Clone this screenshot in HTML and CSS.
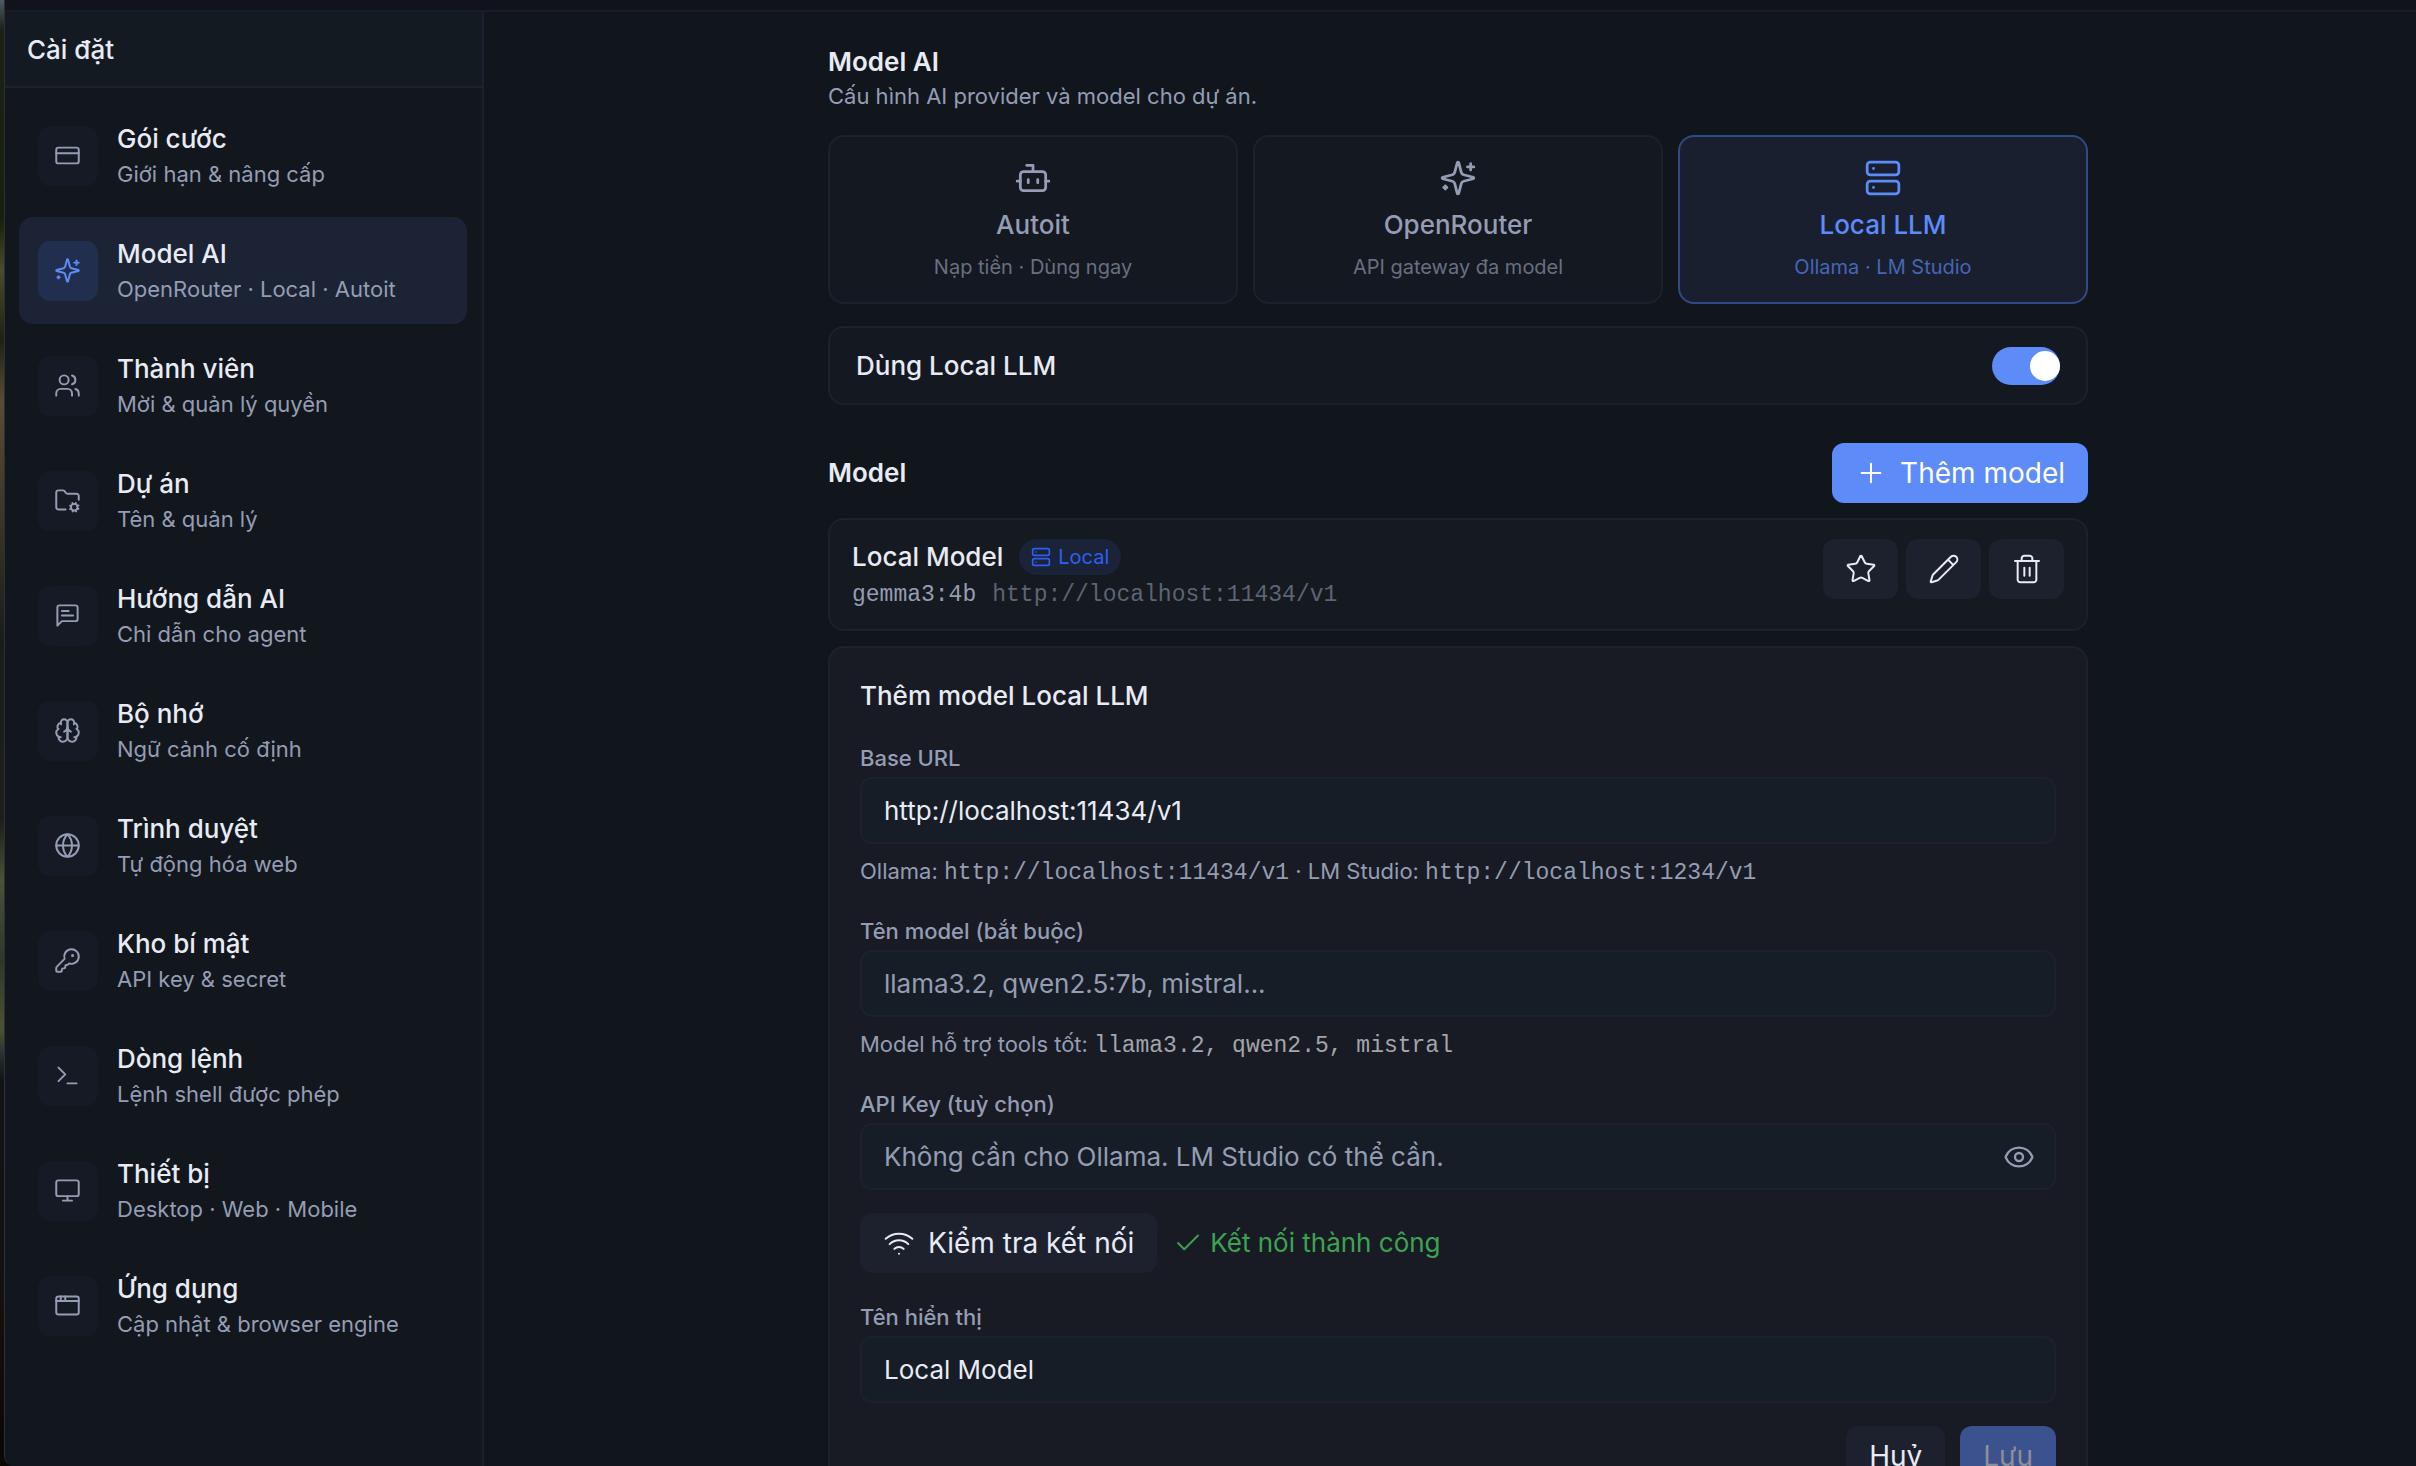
FILE: index.html
```html
<!DOCTYPE html>
<html lang="vi">
<head>
<meta charset="utf-8">
<meta name="viewport" content="width=device-width, initial-scale=1">
<title>Cài đặt</title>
<link rel="stylesheet" href="styles.css">
</head>
<body>
<svg class="sprite" aria-hidden="true">
  <symbol id="i-card" viewBox="0 0 24 24"><rect width="20" height="14" x="2" y="5" rx="2"/><path d="M2 10h20"/></symbol>
  <symbol id="i-sparkles" viewBox="0 0 24 24"><path d="M9.937 15.5A2 2 0 0 0 8.5 14.063l-6.135-1.582a.5.5 0 0 1 0-.962L8.5 9.936A2 2 0 0 0 9.937 8.5l1.582-6.135a.5.5 0 0 1 .963 0L14.063 8.5A2 2 0 0 0 15.5 9.937l6.135 1.581a.5.5 0 0 1 0 .964L15.5 14.063a2 2 0 0 0-1.437 1.437l-1.582 6.135a.5.5 0 0 1-.963 0z"/><path d="M20 3v4M22 5h-4M4 17v2M5 18H3"/></symbol>
  <symbol id="i-users" viewBox="0 0 24 24"><path d="M16 21v-2a4 4 0 0 0-4-4H6a4 4 0 0 0-4 4v2"/><circle cx="9" cy="7" r="4"/><path d="M22 21v-2a4 4 0 0 0-3-3.87M16 3.13a4 4 0 0 1 0 7.75"/></symbol>
  <symbol id="i-folder" viewBox="0 0 24 24"><circle cx="18" cy="18" r="3"/><path d="M10.3 20H4a2 2 0 0 1-2-2V5a2 2 0 0 1 2-2h3.900a2 2 0 0 1 1.690.9l.810 1.200a2 2 0 0 0 1.670.9H20a2 2 0 0 1 2 2v3.300"/><path d="m21.700 19.400-.9-.3M15.200 16.900l-.9-.3M16.600 21.700l.3-.9M19.100 15.200l.3-.9M19.600 21.700l-.4-1M16.800 15.300l-.4-1M14.300 19.600l1-.4M20.700 16.800l1-.4"/></symbol>
  <symbol id="i-message" viewBox="0 0 24 24"><path d="M21 15a2 2 0 0 1-2 2H7l-4 4V5a2 2 0 0 1 2-2h14a2 2 0 0 1 2 2zM13 8H7M17 12H7"/></symbol>
  <symbol id="i-brain" viewBox="0 0 24 24"><path d="M12 5a3 3 0 1 0-5.997.125 4 4 0 0 0-2.526 5.770 4 4 0 0 0 .556 6.588A4 4 0 1 0 12 18Z"/><path d="M12 5a3 3 0 1 1 5.997.125 4 4 0 0 1 2.526 5.770 4 4 0 0 1-.556 6.588A4 4 0 1 1 12 18Z"/><path d="M15 13a4.500 4.500 0 0 1-3-4 4.500 4.500 0 0 1-3 4M17.599 6.500a3 3 0 0 0 .399-1.375M6.003 5.125A3 3 0 0 0 6.401 6.500M3.477 10.896a4 4 0 0 1 .585-.396M19.938 10.500a4 4 0 0 1 .585.396M6 18a4 4 0 0 1-1.967-.516M19.967 17.484A4 4 0 0 1 18 18"/></symbol>
  <symbol id="i-globe" viewBox="0 0 24 24"><circle cx="12" cy="12" r="10"/><path d="M12 2a14.500 14.500 0 0 0 0 20 14.500 14.500 0 0 0 0-20M2 12h20"/></symbol>
  <symbol id="i-key" viewBox="0 0 24 24"><path d="M2.586 17.414A2 2 0 0 0 2 18.828V21a1 1 0 0 0 1 1h3a1 1 0 0 0 1-1v-1a1 1 0 0 1 1-1h1a1 1 0 0 0 1-1v-1a1 1 0 0 1 1-1h.172a2 2 0 0 0 1.414-.586l.814-.814a6.500 6.500 0 1 0-4-4z"/><circle class="dot" cx="16.500" cy="7.500" r=".5"/></symbol>
  <symbol id="i-terminal" viewBox="0 0 24 24"><path d="m4 17 6-6-6-6M12 19h8"/></symbol>
  <symbol id="i-monitor" viewBox="0 0 24 24"><rect width="20" height="14" x="2" y="3" rx="2"/><path d="M8 21h8M12 17v4"/></symbol>
  <symbol id="i-window" viewBox="0 0 24 24"><rect x="2" y="4" width="20" height="16" rx="2"/><path d="M10 4v4M2 8h20M6 4v4"/></symbol>
  <symbol id="i-bot" viewBox="0 0 24 24"><path d="M12 8V4H8"/><rect width="16" height="12" x="4" y="8" rx="2"/><path d="M2 14h2M20 14h2M15 13v2M9 13v2"/></symbol>
  <symbol id="i-server" viewBox="0 0 24 24"><rect width="20" height="8" x="2" y="2" rx="2"/><rect width="20" height="8" x="2" y="14" rx="2"/><path d="M6 6h.01M6 18h.01"/></symbol>
  <symbol id="i-plus" viewBox="0 0 24 24"><path d="M5 12h14M12 5v14"/></symbol>
  <symbol id="i-star" viewBox="0 0 24 24"><path d="M11.525 2.295a.53.53 0 0 1 .95 0l2.310 4.679a2.123 2.123 0 0 0 1.595 1.160l5.166.756a.53.53 0 0 1 .294.904l-3.736 3.638a2.123 2.123 0 0 0-.611 1.878l.882 5.140a.53.53 0 0 1-.771.560l-4.618-2.428a2.122 2.122 0 0 0-1.973 0L6.396 21.010a.53.53 0 0 1-.770-.560l.881-5.139a2.122 2.122 0 0 0-.611-1.879L2.160 9.795a.53.53 0 0 1 .294-.906l5.165-.755a2.122 2.122 0 0 0 1.597-1.160z"/></symbol>
  <symbol id="i-pencil" viewBox="0 0 24 24"><path d="M21.174 6.812a1 1 0 0 0-3.986-3.987L3.842 16.174a2 2 0 0 0-.5.830l-1.321 4.352a.5.5 0 0 0 .623.622l4.353-1.320a2 2 0 0 0 .830-.497zM15 5l4 4"/></symbol>
  <symbol id="i-trash" viewBox="0 0 24 24"><path d="M3 6h18M19 6v14c0 1-1 2-2 2H7c-1 0-2-1-2-2V6M8 6V4c0-1 1-2 2-2h4c1 0 2 1 2 2v2M10 11v6M14 11v6"/></symbol>
  <symbol id="i-eye" viewBox="0 0 24 24"><path d="M2.062 12.348a1 1 0 0 1 0-.696 10.750 10.750 0 0 1 19.876 0 1 1 0 0 1 0 .696 10.750 10.750 0 0 1-19.876 0"/><circle cx="12" cy="12" r="3"/></symbol>
  <symbol id="i-wifi" viewBox="0 0 24 24"><path d="M12 20h.01M2 8.820a15 15 0 0 1 20 0M5 12.859a10 10 0 0 1 14 0M8.500 16.429a5 5 0 0 1 7 0"/></symbol>
  <symbol id="i-check" viewBox="0 0 24 24"><path d="M20 6 9 17l-5-5"/></symbol>
</svg>

<div class="app">
  <div class="topbar"></div>
  <div class="layout">
    <aside class="sidebar">
      <header class="sidebar-header"><h1>Cài đặt</h1></header>
      <nav class="nav" aria-label="Cài đặt">
        <a class="nav-item" href="#plan"><span class="nav-icon"><svg class="icon"><use href="#i-card"/></svg></span><span class="nav-text"><span class="nav-title">Gói cước</span><span class="nav-sub">Giới hạn &amp; nâng cấp</span></span></a>
        <a class="nav-item active" href="#model" aria-current="page"><span class="nav-icon"><svg class="icon"><use href="#i-sparkles"/></svg></span><span class="nav-text"><span class="nav-title">Model AI</span><span class="nav-sub">OpenRouter · Local · Autoit</span></span></a>
        <a class="nav-item" href="#members"><span class="nav-icon"><svg class="icon"><use href="#i-users"/></svg></span><span class="nav-text"><span class="nav-title">Thành viên</span><span class="nav-sub">Mời &amp; quản lý quyền</span></span></a>
        <a class="nav-item" href="#project"><span class="nav-icon"><svg class="icon"><use href="#i-folder"/></svg></span><span class="nav-text"><span class="nav-title">Dự án</span><span class="nav-sub">Tên &amp; quản lý</span></span></a>
        <a class="nav-item" href="#guide"><span class="nav-icon"><svg class="icon"><use href="#i-message"/></svg></span><span class="nav-text"><span class="nav-title">Hướng dẫn AI</span><span class="nav-sub">Chỉ dẫn cho agent</span></span></a>
        <a class="nav-item" href="#memory"><span class="nav-icon"><svg class="icon"><use href="#i-brain"/></svg></span><span class="nav-text"><span class="nav-title">Bộ nhớ</span><span class="nav-sub">Ngữ cảnh cố định</span></span></a>
        <a class="nav-item" href="#browser"><span class="nav-icon"><svg class="icon"><use href="#i-globe"/></svg></span><span class="nav-text"><span class="nav-title">Trình duyệt</span><span class="nav-sub">Tự động hóa web</span></span></a>
        <a class="nav-item" href="#secrets"><span class="nav-icon"><svg class="icon"><use href="#i-key"/></svg></span><span class="nav-text"><span class="nav-title">Kho bí mật</span><span class="nav-sub">API key &amp; secret</span></span></a>
        <a class="nav-item" href="#shell"><span class="nav-icon"><svg class="icon"><use href="#i-terminal"/></svg></span><span class="nav-text"><span class="nav-title">Dòng lệnh</span><span class="nav-sub">Lệnh shell được phép</span></span></a>
        <a class="nav-item" href="#devices"><span class="nav-icon"><svg class="icon"><use href="#i-monitor"/></svg></span><span class="nav-text"><span class="nav-title">Thiết bị</span><span class="nav-sub">Desktop · Web · Mobile</span></span></a>
        <a class="nav-item" href="#application"><span class="nav-icon"><svg class="icon"><use href="#i-window"/></svg></span><span class="nav-text"><span class="nav-title">Ứng dụng</span><span class="nav-sub">Cập nhật &amp; browser engine</span></span></a>
      </nav>
    </aside>

    <main class="main">
      <div class="content">
        <h2 class="heading">Model AI</h2>
        <p class="lead">Cấu hình AI provider và model cho dự án.</p>

        <div class="providers">
          <button type="button" class="provider"><svg class="icon"><use href="#i-bot"/></svg><span class="provider-name">Autoit</span><span class="provider-sub">Nạp tiền · Dùng ngay</span></button>
          <button type="button" class="provider"><svg class="icon"><use href="#i-sparkles"/></svg><span class="provider-name">OpenRouter</span><span class="provider-sub">API gateway đa model</span></button>
          <button type="button" class="provider selected" aria-pressed="true"><svg class="icon"><use href="#i-server"/></svg><span class="provider-name">Local LLM</span><span class="provider-sub">Ollama · LM Studio</span></button>
        </div>

        <div class="toggle-row">
          <label for="use-local">Dùng Local LLM</label>
          <input class="switch" type="checkbox" id="use-local" checked>
        </div>

        <div class="section-head">
          <h2 class="heading">Model</h2>
          <button type="button" class="btn primary"><svg class="icon"><use href="#i-plus"/></svg>Thêm model</button>
        </div>

        <div class="model-card">
          <div class="model-info">
            <div class="model-line"><span class="model-name">Local Model</span><span class="badge"><svg class="icon"><use href="#i-server"/></svg>Local</span></div>
            <div class="model-meta"><span>gemma3:4b</span><span class="model-url">http://localhost:11434/v1</span></div>
          </div>
          <div class="model-actions">
            <button type="button" class="btn square" aria-label="Đặt mặc định"><svg class="icon"><use href="#i-star"/></svg></button>
            <button type="button" class="btn square" aria-label="Sửa"><svg class="icon"><use href="#i-pencil"/></svg></button>
            <button type="button" class="btn square" aria-label="Xoá"><svg class="icon"><use href="#i-trash"/></svg></button>
          </div>
        </div>

        <form class="form">
          <h3 class="form-title">Thêm model Local LLM</h3>
          <div class="field">
            <label for="base-url">Base URL</label>
            <input class="input" id="base-url" type="text" value="http://localhost:11434/v1">
            <p class="hint">Ollama: <code>http://localhost:11434/v1</code> · LM Studio: <code>http://localhost:1234/v1</code></p>
          </div>
          <div class="field">
            <label for="model-id">Tên model (bắt buộc)</label>
            <input class="input" id="model-id" type="text" placeholder="llama3.2, qwen2.5:7b, mistral...">
            <p class="hint">Model hỗ trợ tools tốt: <code class="neutral">llama3.2, qwen2.5, mistral</code></p>
          </div>
          <div class="field">
            <label for="api-key">API Key (tuỳ chọn)</label>
            <div class="input with-action">
              <input id="api-key" type="password" placeholder="Không cần cho Ollama. LM Studio có thể cần.">
              <button type="button" class="reveal" aria-label="Hiện API key"><svg class="icon"><use href="#i-eye"/></svg></button>
            </div>
          </div>
          <div class="test-row">
            <button type="button" class="btn"><svg class="icon"><use href="#i-wifi"/></svg>Kiểm tra kết nối</button>
            <span class="success" role="status"><svg class="icon"><use href="#i-check"/></svg>Kết nối thành công</span>
          </div>
          <div class="field">
            <label for="display-name">Tên hiển thị</label>
            <input class="input" id="display-name" type="text" value="Local Model">
          </div>
          <div class="form-actions">
            <button type="button" class="btn">Huỷ</button>
            <button type="submit" class="btn primary" disabled>Lưu</button>
          </div>
        </form>
      </div>
    </main>
  </div>
</div>
</body>
</html>
```

FILE: styles.css
```css
:root {
  --bg: #11161d;
  --text: #e8ebf4;
  --muted: #949db3;
  --faint: #687080;
  --accent: #5d8bf8;
  --border: #1c212c;
  --button: #1d212e;
  --input: #171d26;
  --mono: "Liberation Mono", "DejaVu Sans Mono", monospace;
}

* { box-sizing: border-box; }

body {
  margin: 0;
  height: 100vh;
  overflow: hidden;
  padding-left: 4px;
  background: linear-gradient(#4c5a66 0, #1c2116 30px, #17200f 220px, #4a4b30 270px, #1c2214 340px, #5b4a3a 400px, #191e16 640px, #1c2017 820px, #4a513c 880px, #2e372a 960px, #4c5236 1030px, #1f2a2c 1060px, #121413 1080px, #131210 1290px, #170f08 1310px, #0a0705 1466px);
  color: var(--text);
  font-family: Inter, "Noto Sans", sans-serif;
  font-size: 26px;
  line-height: 36px;
}

h1, h2, h3, p { margin: 0; font-size: 26px; }
button, input { font: inherit; color: inherit; }
a { color: inherit; text-decoration: none; }
.sprite { display: none; }

.icon {
  width: 32px;
  height: 32px;
  flex: none;
  fill: none;
  stroke: currentColor;
  stroke-width: 1.5;
  stroke-linecap: round;
  stroke-linejoin: round;
}
.dot { fill: currentColor; }

.app {
  display: flex;
  flex-direction: column;
  height: 100%;
  overflow: hidden;
  background: var(--bg);
  border-left: 1px solid #2b3036;
  border-bottom-left-radius: 10px;
}
.topbar { flex: none; height: 12px; background: #10131b; border-bottom: 2px solid #191d29; }
.layout { flex: 1; min-height: 0; display: flex; }

/* Sidebar */
.sidebar { flex: none; width: 479px; border-right: 2px solid #1c222d; background: #12161d; }
.sidebar-header { padding: 20px 22px 18px; background: #141a21; border-bottom: 2px solid #1c232d; }
.sidebar-header h1 { font-weight: 500; }
.nav { display: flex; flex-direction: column; gap: 8px; padding: 14px 15px 14px 14px; }
.nav-item { display: flex; align-items: center; gap: 19px; padding: 19px; border-radius: 14px; }
.nav-item.active { background: #1b2335; }
.nav-icon {
  flex: none;
  display: grid;
  place-items: center;
  width: 60px;
  height: 60px;
  padding: 0 1px 1px 0;
  border-radius: 12px;
  background: #161a24;
  color: var(--muted);
}
.nav-icon .icon { width: 27px; height: 27px; stroke-width: 1.75; }
.active .nav-icon { background: #212e4d; color: var(--accent); }
.nav-text { display: flex; flex-direction: column; gap: 1px; }
.nav-title { font-weight: 500; }
.nav-sub { font-size: 22px; line-height: 32px; color: var(--muted); }

/* Content */
.main { flex: 1; min-width: 0; overflow: hidden; padding: 32px 0 32px 16px; }
.content { max-width: 1260px; margin: 0 auto; }
.heading { font-weight: 600; }
.lead { font-size: 22px; line-height: 32px; color: var(--muted); }

.providers { display: grid; grid-template-columns: repeat(3, 1fr); gap: 15px; margin-top: 23px; }
.provider {
  display: flex;
  flex-direction: column;
  align-items: center;
  gap: 10px;
  padding: 22px 22px 21px;
  border: 2px solid var(--border);
  border-radius: 16px;
  background: #141820;
  color: var(--muted);
}
.provider .icon { width: 38px; height: 38px; stroke-width: 1.75; }
.provider-name { font-weight: 500; }
.provider-sub { font-size: 20px; line-height: 28px; color: var(--faint); }
.provider.selected { border-color: #304a85; background: #191f2e; color: var(--accent); }
.selected .provider-sub { color: #4666b4; }

.toggle-row {
  display: flex;
  align-items: center;
  justify-content: space-between;
  margin-top: 22px;
  padding: 19px 26px 18px;
  border: 2px solid var(--border);
  border-radius: 16px;
  background: #141820;
  font-weight: 500;
}
.switch {
  appearance: none;
  display: flex;
  align-items: center;
  width: 68px;
  height: 38px;
  margin: 0;
  border-radius: 19px;
  background: #2a3040;
}
.switch::before { content: ""; width: 30px; height: 30px; border-radius: 50%; background: #fff; }
.switch:checked { justify-content: flex-end; background: var(--accent); }

.section-head { display: flex; align-items: center; justify-content: space-between; margin-top: 38px; }

.btn {
  display: inline-flex;
  align-items: center;
  justify-content: center;
  gap: 13px;
  height: 60px;
  padding: 0 23px;
  border: 0;
  border-radius: 12px;
  background: var(--button);
  font-size: 28px;
}
.btn.primary { background: var(--accent); color: #fff; }
.btn.primary:disabled { background: #3b528f; color: #8d8f96; }
.btn.square { width: 75px; padding: 0; }

.model-card {
  display: flex;
  align-items: flex-start;
  justify-content: space-between;
  margin-top: 15px;
  padding: 19px 22px 18px;
  border: 2px solid var(--border);
  border-radius: 16px;
  background: #151920;
}
.model-info { display: flex; flex-direction: column; gap: 4px; }
.model-line { display: flex; align-items: center; gap: 16px; }
.model-name { font-weight: 500; }
.badge {
  display: inline-flex;
  align-items: center;
  gap: 7px;
  height: 36px;
  padding: 0 12px;
  border-radius: 18px;
  background: #1a2338;
  color: #2f5ff0;
  font-size: 20px;
}
.badge .icon { width: 20px; height: 20px; stroke-width: 2; }
.model-meta { display: flex; gap: 16px; font-family: var(--mono); font-size: 23px; line-height: 32px; color: var(--muted); }
.model-url { color: #5d6472; }
.model-actions { display: flex; gap: 8px; }

.form {
  margin-top: 15px;
  padding: 30px;
  border: 2px solid var(--border);
  border-radius: 16px;
  background: #181b23;
}
.form-title { font-weight: 500; }
.field { margin-top: 28px; }
.field label { display: block; margin-bottom: 3px; font-size: 22px; font-weight: 500; line-height: 32px; color: var(--muted); }
.input {
  display: flex;
  align-items: center;
  width: 100%;
  height: 67px;
  padding: 0 22px;
  border: 2px solid var(--border);
  border-radius: 12px;
  background: var(--input);
}
.with-action input { flex: 1; min-width: 0; padding: 0; border: 0; background: none; }
::placeholder { color: var(--muted); opacity: 1; }
.reveal { display: flex; padding: 0; margin-right: -3px; border: 0; background: none; color: var(--muted); }
.reveal .icon { stroke-width: 1.75; }
.hint { margin-top: 11px; font-size: 22px; line-height: 32px; color: var(--muted); }
code { font-family: var(--mono); font-size: 23px; line-height: 1; }
code.neutral { color: #a3a5ab; }

.test-row { display: flex; align-items: center; gap: 16px; margin-top: 23px; }
.success { display: inline-flex; align-items: center; gap: 7px; color: #3da352; }
.success .icon { width: 30px; height: 30px; }
.form-actions { display: flex; justify-content: flex-end; gap: 15px; margin-top: 23px; }
```
